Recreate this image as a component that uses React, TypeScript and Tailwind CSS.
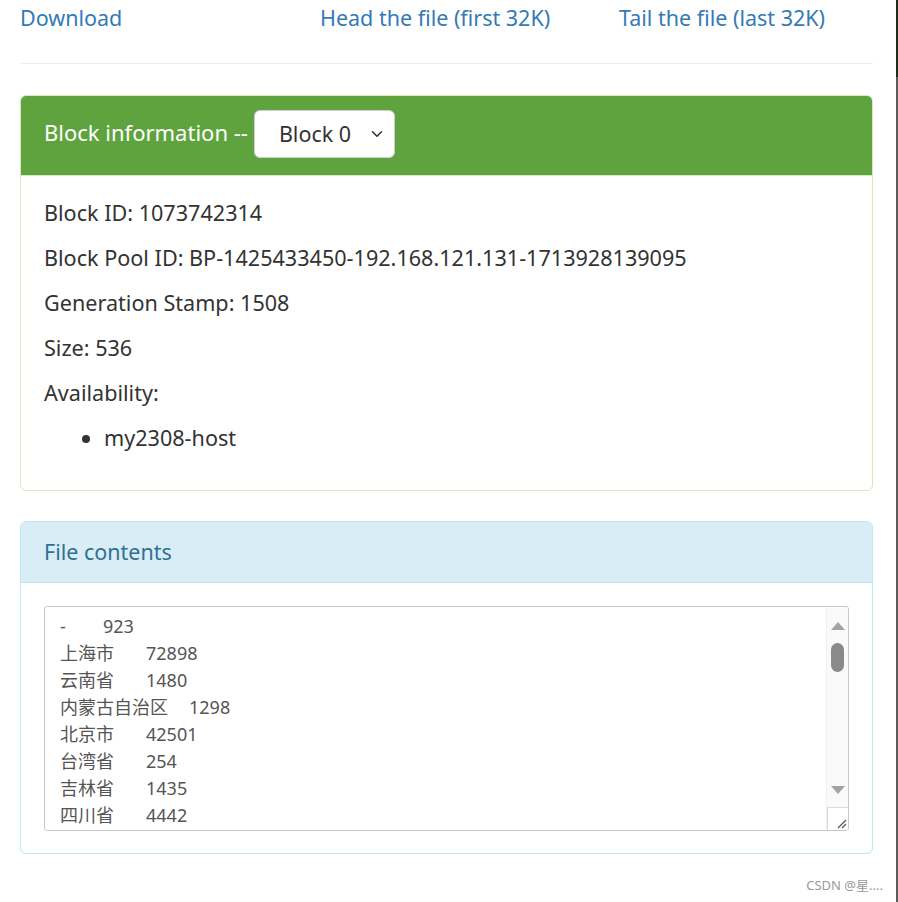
import { ChevronDown } from "lucide-react";

const rows: [string, string][] = [
  ["-", "923"],
  ["上海市", "72898"],
  ["云南省", "1480"],
  ["内蒙古自治区", "1298"],
  ["北京市", "42501"],
  ["台湾省", "254"],
  ["吉林省", "1435"],
  ["四川省", "4442"],
];

const font = { fontFamily: '"Noto Sans", "Noto Sans CJK SC", sans-serif' };

function BlockPanel() {
  return (
    <section className="rounded-[6px] border border-[#d6e9c6] overflow-hidden">
      <div className="flex h-[79px] items-center gap-[6px] bg-[#5fa33e] px-[23px] pb-[3px]">
        <h3 className="pb-[4px] text-[22px] text-white">Block information --</h3>
        <div className="flex h-[48px] w-[141px] items-center justify-between rounded-[6px] border border-[#cfcfcf] bg-white pl-[24px] pr-[8px] text-[21.5px] text-[#333]">
          <span>Block 0</span>
          <ChevronDown size={18} strokeWidth={2} />
        </div>
      </div>
      <div className="border-t border-[#d6e9c6] px-[23px] pt-[22px] pb-[22px] text-[21.6px] leading-[30px] text-[#333]">
        <p className="mb-[15px]">Block ID: 1073742314</p>
        <p className="mb-[15px]">
          Block Pool ID: BP-1425433450-192.168.121.131-1713928139095
        </p>
        <p className="mb-[15px]">Generation Stamp: 1508</p>
        <p className="mb-[15px]">Size: 536</p>
        <p className="mb-[15px]">Availability:</p>
        <ul className="mb-[15px] list-disc pl-[60px]">
          <li>my2308-host</li>
        </ul>
      </div>
    </section>
  );
}

function FakeScrollbar() {
  return (
    <div className="flex w-[22px] flex-col border-l border-[#f0f0f0] bg-[#fafafa]">
      <div className="flex flex-1 flex-col items-center pt-[15px]">
        <svg width="14" height="8" viewBox="0 0 14 8">
          <path d="M7 0 L14 8 L0 8 Z" fill="#a3a3a3" />
        </svg>
        <div className="mt-[13px] h-[29px] w-[13px] rounded-full bg-[#8a8a8a]" />
        <div className="flex-1" />
        <svg width="14" height="8" viewBox="0 0 14 8" className="mb-[13px]">
          <path d="M0 0 L14 0 L7 8 Z" fill="#a3a3a3" />
        </svg>
      </div>
      <div className="relative h-[23px] border-t border-l border-[#dcdcdc] bg-white">
        <svg width="12" height="12" viewBox="0 0 12 12" className="absolute right-[1px] bottom-[1px]">
          <path d="M11 3 L3 11 M11 7 L7 11" stroke="#555" strokeWidth="1.2" />
        </svg>
      </div>
    </div>
  );
}

function ContentsPanel() {
  return (
    <section className="mt-[30px] rounded-[6px] border border-[#bce8f1] overflow-hidden">
      <div className="flex h-[60px] items-center bg-[#d9edf7] px-[23px]">
        <h3 className="text-[21.5px] text-[#31708f]">File contents</h3>
      </div>
      <div className="border-t border-[#bce8f1] px-[23px] pt-[23px] pb-[22px]">
        <div className="flex h-[225px] overflow-hidden rounded-[3px] border border-[#c8c8c8] bg-white">
          <div className="flex-1 overflow-hidden pt-[6px] pl-[15px] whitespace-pre text-[18px] leading-[27px] text-[#555] [tab-size:43px]">
            {rows.map(([a, b]) => (
              <div key={a}>{a + "\t" + b}</div>
            ))}
          </div>
          <FakeScrollbar />
        </div>
      </div>
    </section>
  );
}

export default function App() {
  return (
    <div className="relative flex h-[902px] w-[898px] overflow-hidden bg-white" style={font}>
      <main className="flex-1 pl-[20px] pr-[23px]">
        <div className="grid grid-cols-[300px_299px_1fr] pt-[3px] text-[21.5px] leading-[30px] text-[#337ab7]">
          <a href="#">Download</a>
          <a href="#">Head the file (first 32K)</a>
          <a href="#">Tail the file (last 32K)</a>
        </div>
        <hr className="mt-[30px] border-[#eeeeee]" />
        <div className="mt-[31px]">
          <BlockPanel />
          <ContentsPanel />
        </div>
      </main>
      <div className="flex w-[2px] flex-col">
        <div className="h-[77px] bg-[#1d2e18]" />
        <div className="flex-1 bg-[#5a5a5a]" />
      </div>
      <span className="absolute right-[15px] bottom-[7px] text-[13px] text-[#999]">
        CSDN @星....
      </span>
    </div>
  );
}
